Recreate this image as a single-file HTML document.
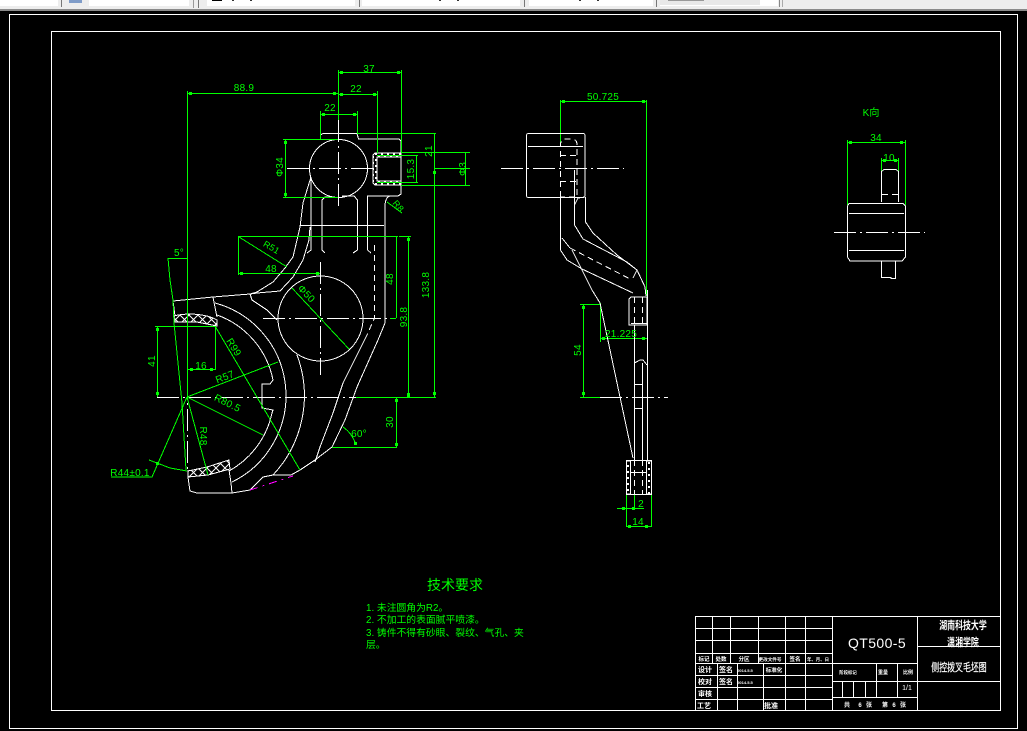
<!DOCTYPE html>
<html><head><meta charset="utf-8"><title>CAD</title>
<style>
html,body{margin:0;padding:0;background:#000;width:1027px;height:731px;overflow:hidden}
svg{position:absolute;left:0;top:0;display:block}
.w{fill:none;stroke:#fff;stroke-width:1}
.g{fill:none;stroke:#0f0;stroke-width:1}
.cl{stroke-dasharray:22 4 2 4}
.da{stroke-dasharray:6 4}
.t{fill:#0f0;font-family:"Liberation Sans",sans-serif;font-size:10px;letter-spacing:.25px;text-anchor:middle}
.c{font-family:"Liberation Sans","Noto Sans CJK SC",sans-serif}
.tb{fill:#fff;font-family:"Liberation Sans","Noto Sans CJK SC",sans-serif;font-size:7px;font-weight:bold;text-anchor:middle}
</style></head><body>
<svg width="1027" height="731" viewBox="0 0 1027 731" xmlns="http://www.w3.org/2000/svg">
<defs>
<pattern id="h" width="9" height="9" patternUnits="userSpaceOnUse">
<path d="M0 0L9 9M9 0L0 9" stroke="#fff" stroke-width="1" fill="none"/>
</pattern>
<pattern id="v" width="6" height="6" patternUnits="userSpaceOnUse">
<rect width="2" height="2" fill="#fff"/><rect x="3" y="3" width="2" height="2" fill="#fff"/>
</pattern>
</defs>
<rect width="1027" height="731" fill="#000"/>
<!-- toolbar -->
<rect x="0" y="0" width="1027" height="9" fill="#ededed"/>
<rect x="0" y="9" width="1027" height="2" fill="#8a8a8a"/>
<rect x="0" y="0" width="58" height="6" fill="#fff"/>
<rect x="61" y="0" width="1" height="7" fill="#777"/>
<rect x="69" y="0" width="13" height="3" fill="#7f9cc8"/>
<rect x="89" y="0" width="100" height="6" fill="#fff"/>
<rect x="193" y="0" width="1" height="8" fill="#999"/><rect x="198" y="0" width="1" height="8" fill="#777"/>
<rect x="207" y="0" width="148" height="6" fill="#fff"/>
<rect x="212" y="0" width="10" height="1" fill="#000"/>
<rect x="232" y="0" width="2" height="1" fill="#333"/><rect x="250" y="0" width="2" height="1" fill="#333"/>
<rect x="359" y="0" width="1" height="7" fill="#777"/>
<rect x="362" y="0" width="158" height="6" fill="#fff"/>
<rect x="439" y="0" width="2" height="1" fill="#333"/><rect x="457" y="0" width="2" height="1" fill="#333"/>
<rect x="524" y="0" width="1" height="7" fill="#777"/>
<rect x="529" y="0" width="124" height="6" fill="#fff"/>
<rect x="579" y="0" width="2" height="1" fill="#333"/><rect x="597" y="0" width="2" height="1" fill="#333"/>
<rect x="656" y="0" width="1" height="7" fill="#777"/>
<rect x="660" y="0" width="118" height="6" fill="#fff"/><rect x="660" y="0" width="100" height="5" fill="#e8e8e8"/>
<rect x="668" y="0" width="36" height="1" fill="#999"/>
<rect x="779" y="0" width="1" height="7" fill="#888"/>
<rect x="782" y="0" width="1" height="7" fill="#aaa"/>
<!-- frames -->
<rect x="9.5" y="14.5" width="1008" height="714" class="w"/>
<rect x="51.5" y="31.5" width="949" height="679" class="w"/>

<g shape-rendering="crispEdges">
<!-- FRONT VIEW white -->
<g class="w">
<circle cx="338.5" cy="168.5" r="29"/>
<circle cx="320.5" cy="318.5" r="42.5"/>
<path class="cl" d="M287 168.5H381"/>
<path class="cl" d="M338.5 120V208"/>
<path class="cl" d="M320.5 262V375"/>
<path class="cl" d="M263 318.5H393"/>
<path class="cl" d="M157 397.5H356"/>
<path class="cl" d="M187.5 377V470"/>
<path d="M320.5 139V135L323 133.5H357L358.5 139H399L401 141V153"/>
<path d="M401 185V194L398 196H390C386 197 385 202 385 207V323L378 340L357 387L345 420L332 447L315 460L300 470L291 475"/>
<path d="M250 490L232 493H197L190 491L188 477V470"/>
<path d="M367.5 250V196H398"/>
<path d="M367.5 250L371 253"/>
<path d="M322 250V200L325 197H335M322 250L325 253"/>
<path d="M357.5 250V200L354 196H342M357.5 250L353 253"/>
<path d="M311 177V250L307 253"/>
<path d="M311 177L303 203L300 227L297 240L293 257L285 268L273 282L257 292L250 294L213 297L173 301L175 316"/>
<path d="M310 227L309 240L303 260L293 277L280 291L257 293L250 294L252 300L267 310L277 320"/>
<path d="M300 225.5H384"/>
<path class="da" d="M374.5 245V318L367 335"/>
<path d="M367 335L343 383L333 413L320 447L315 462"/>
<path d="M213 297L217 317"/>
<path d="M215 303A96 96 0 0 1 232 482"/>
<path d="M217 315A87 87 0 0 1 273 380L270 384H262V408L273 410L272 413A87 87 0 0 1 229 471"/>
<path d="M297 355A116 116 0 0 1 273 475L263 477L250 490"/>
<path d="M273 475H291"/>
<path d="M229 470L231 483L232 493"/>
<path d="M188 471V477"/>
<path d="M174 316C185 313 205 313 217 320V326L197 322H175Z" fill="url(#h)"/>
<path d="M188 471L207 467L229 460L230 469L208 475L188 477Z" fill="url(#h)"/>
<path d="M373 155L375 153H401V185H375L373 183Z" fill="url(#v)"/>
<path d="M377 157H401V181H377Z" fill="#000"/>
</g>
<path d="M250 490L293 476" fill="none" stroke="#f0f" stroke-dasharray="8 5 2 5"/>
<!-- FRONT VIEW green -->
<g class="g">
<path d="M338.5 70V120M401.5 70V153M338 72.5H401"/>
<path d="M377.5 91V153M338 94.5H377"/>
<path d="M187.5 91V397M187 93.5H338"/>
<path d="M320.5 111V139M357.5 111V133M320 114.5H357"/>
<path d="M283 139.5H338M283 197.5H338M285.5 139V197"/>
<path d="M357 133.5H436M434.5 133V397M356 397.5H436"/>
<path d="M401 152.5H470M401 185.5H470M465.5 152V185M434 168.5H470"/>
<path d="M377 155.5H418M377 182.5H418M416.5 155V182"/>
<path d="M387 202L402 213"/>
<path d="M238 236.5H398M399 236.5H411M238.5 236V275M238 273.5H320M239 237L287 267"/>
<path d="M396.5 236V318M390 318.5H396M408.5 236V397M396.5 397V447M332 447.5H397"/>
<path d="M343 427Q352 433 356 445"/>
<path d="M168 258.5H187M168 258L170 280L173 300L174 323L182 403L186 470"/>
<path d="M155 326.5H215M157.5 326V397M215.5 326V370M187 369.5H215"/>
<path d="M215 326L300 470"/>
<path d="M187 397L278 362"/>
<path d="M187 397L263 435"/>
<path d="M187 397L208 475"/>
<path d="M187 397L152 477H111"/>
<path d="M149 460L157 463L170 468L187 471"/>
<path d="M292 288L349 349"/>
<!-- side -->
<path d="M560.5 100V143M646.5 100V296M560 101.5H646"/>
<path d="M600.5 303V342M647.5 325V342M600 338.5H648"/>
<path d="M580 304.5H600M580 397.5H600M583.5 304V397"/>
<path d="M617 508.5H644M626.5 494V527M651.5 494V527M626 526.5H651M634.5 494V510"/>
<!-- K -->
<path d="M847.5 140V205M905.5 140V205M847 142.5H905"/>
<path d="M881.5 158V172M898.5 158V172M881 160.5H898"/>
</g>
<g fill="#0f0">
<rect x="340" y="71" width="3" height="3"/><rect x="397" y="71" width="3" height="3"/>
<rect x="340" y="93" width="3" height="3"/><rect x="373" y="93" width="3" height="3"/>
<rect x="189" y="92" width="3" height="3"/><rect x="333" y="92" width="3" height="3"/>
<rect x="322" y="113" width="3" height="3"/><rect x="353" y="113" width="3" height="3"/>
<rect x="284" y="141" width="3" height="3"/><rect x="284" y="193" width="3" height="3"/>
<rect x="240" y="272" width="3" height="3"/><rect x="316" y="272" width="3" height="3"/>
<rect x="433" y="171" width="3" height="3"/><rect x="407" y="238" width="3" height="3"/>
<rect x="407" y="393" width="3" height="5"/><rect x="433" y="392" width="3" height="3"/>
<rect x="395" y="443" width="3" height="3"/><rect x="395" y="399" width="3" height="3"/>
<rect x="156" y="328" width="3" height="3"/><rect x="156" y="392" width="3" height="3"/>
<rect x="190" y="368" width="3" height="3"/><rect x="210" y="368" width="3" height="3"/>
<rect x="562" y="100" width="3" height="3"/><rect x="642" y="100" width="3" height="3"/>
<rect x="602" y="337" width="3" height="3"/><rect x="642" y="337" width="3" height="3"/>
<rect x="582" y="306" width="3" height="3"/><rect x="582" y="392" width="3" height="3"/>
<rect x="622" y="507" width="3" height="3"/><rect x="632" y="507" width="3" height="3"/>
<rect x="628" y="525" width="3" height="3"/><rect x="645" y="525" width="3" height="3"/>
<rect x="849" y="141" width="3" height="3"/><rect x="900" y="141" width="3" height="3"/>
<rect x="883" y="159" width="3" height="3"/><rect x="894" y="159" width="3" height="3"/>
<rect x="156" y="462" width="3" height="3"/><rect x="354" y="442" width="3" height="3"/>
</g>

<!-- SIDE VIEW white -->
<g class="w">
<rect x="526.5" y="133.5" width="58.5" height="64" rx="2"/>
<path d="M528 146.5H583"/>
<path class="cl" d="M501 168.5H624"/>
<path class="da" d="M560.5 197V145Q560.5 139 566 139H572Q577 139 577 145V197H560"/>
<path class="da" d="M560 155.5H577M560 181.5H577"/>
<path d="M574.5 170V225L583 239L627 262L637 270L633 278"/>
<path d="M585.5 197V222L593 233L617 255L637 270L645 287L646 296"/>
<path d="M560.5 197V250L567 260L582 269L633 293"/>
<path d="M562 238L570 248"/>
<path class="da" d="M570 248L632 280"/>
<path d="M572 250L592 290L600 303L620 397L633 458"/>
<path d="M574.5 205L578 198L585 197"/>
<path d="M629 325V299L631 297H647V325H631Z"/>
<path d="M631 323.5H647"/>
<path class="da" d="M634.5 297V325M642.5 297V325"/>
<path d="M634.5 325V460M642.5 363V460M647.5 290V460"/>
<path d="M634.5 363L640 360H643L647 365"/>
<path d="M634 384.5H642M634 408.5H642"/>
<path class="cl" d="M600 397.5H668"/>
<rect x="626.5" y="460.5" width="25" height="34"/>
<rect x="626.5" y="461" width="4" height="33" fill="url(#v)"/>
<rect x="646.5" y="461" width="5" height="33" fill="url(#v)"/>
<path d="M630 472.5H647"/>
<path class="da" d="M634.5 460V494M642.5 460V494"/>
<!-- K VIEW -->
<path d="M881.5 202V171.5L884 169.5H896L898.5 171.5V202"/>
<path class="da" d="M882 194.5H898"/>
<path d="M880 203.5H901"/>
<path d="M847.5 206L849 203.5H903L905.5 206V257L902 261H850L847.5 257Z"/>
<path d="M849 213.5H904M849 250.5H904"/>
<path class="cl" d="M834 232.5H925"/>
<path d="M881.5 261V277.5H891V278.5H895.5V261"/>
</g>

<!-- TITLE BLOCK -->
<g class="w">
<rect x="695.5" y="616.5" width="305" height="94"/>
<path d="M695 628.5H832M695 640.5H832M695 653.5H832M695 663.5H917M695 675.5H832M695 687.5H832M695 699.5H832"/>
<path d="M712.5 616V663M730.5 616V663M758.5 616V663M785.5 616V711M805.5 616V711"/>
<path d="M717.5 663V711M737.5 663V711M763.5 663V711"/>
<path d="M832.5 616V711M917.5 616V711"/>
<path d="M917 646.5H1001M832 681.5H1001M832 697.5H917"/>
<path d="M842.5 681V697M853.5 681V697M865.5 681V697M876.5 663V697M897.5 663V697"/>
</g>
</g>

<!-- green texts -->
<g class="t">
<text x="369" y="72">37</text>
<text x="356" y="92">22</text>
<text x="330" y="111">22</text>
<text x="244" y="91">88.9</text>
<text transform="translate(283,167) rotate(-90)">Φ34</text>
<text transform="translate(432,151) rotate(-90)">21</text>
<text transform="translate(414,169) rotate(-90)">15.3</text>
<text transform="translate(466,169) rotate(-90)">Φ3</text>
<text transform="translate(429,285) rotate(-90)">133.8</text>
<text transform="translate(393,279) rotate(-90)">48</text>
<text transform="translate(407,317) rotate(-90)">93.8</text>
<text transform="translate(393,422) rotate(-90)">30</text>
<text transform="translate(155,361) rotate(-90)">41</text>
<text transform="translate(396,208) rotate(50)" font-size="9">R8</text>
<text transform="translate(270,250) rotate(30)" font-size="9">R51</text>
<text x="271" y="272">48</text>
<text x="179" y="256">5°</text>
<text x="201" y="369">16</text>
<text transform="translate(231,349) rotate(58)">R99</text>
<text transform="translate(226,380) rotate(-21)">R57</text>
<text transform="translate(226,406) rotate(26)">R80.5</text>
<text transform="translate(200,436) rotate(90)">R48</text>
<text x="130" y="476">R44±0.1</text>
<text x="359" y="437">60°</text>
<text transform="translate(304,296) rotate(46)">Φ50</text>
<text x="603" y="100">50.725</text>
<text x="621" y="337">21.225</text>
<text transform="translate(581,350) rotate(-90)">54</text>
<text x="641" y="507">2</text>
<text x="638" y="525">14</text>
<text x="876" y="141">34</text>
<text x="889" y="161">10</text>
<text class="c" x="871" y="116" font-size="10" style="letter-spacing:0">K向</text>
</g>

<g class="c" fill="#0f0" font-family="&quot;Liberation Sans&quot;,&quot;Noto Sans CJK SC&quot;,sans-serif">
<text x="427" y="590" font-size="14">技术要求</text>
<text x="366" y="611" font-size="9.8">1.  未注圆角为R2。</text>
<text x="366" y="623" font-size="9.8">2.  不加工的表面腻平喷漆。</text>
<text x="366" y="636" font-size="9.8">3.  铸件不得有砂眼、裂纹、气孔、夹</text>
<text x="366" y="648" font-size="9.8">层。</text>
</g>

<!-- title block text -->
<g class="tb">
<text x="704" y="661" font-size="5.5">标记</text>
<text x="721" y="661" font-size="5.5">处数</text>
<text x="744" y="661" font-size="5.5">分区</text>
<text x="770" y="661" font-size="4.6">更改文件号</text>
<text x="795" y="661" font-size="5.5">签名</text>
<text x="818" y="661" font-size="4.4">年、月、日</text>
<text x="705" y="672">设计</text>
<text x="726" y="672">签名</text>
<text x="745" y="672" font-size="4">2014.5.5</text>
<text x="774" y="672" font-size="5.5">标准化</text>
<text x="705" y="684">校对</text>
<text x="726" y="684">签名</text>
<text x="745" y="684" font-size="4">2014.5.5</text>
<text x="705" y="696">审核</text>
<text x="704" y="708">工艺</text>
<text x="771" y="708">批准</text>
<text x="848" y="674" font-size="4.4">阶段标记</text>
<text x="883" y="674" font-size="5">重量</text>
<text x="908" y="674" font-size="5">比例</text>
<text x="907" y="690" style="font-weight:normal">1/1</text>
<text x="847" y="707" font-size="6">共</text>
<text x="860" y="707" font-size="6">6</text>
<text x="869" y="707" font-size="6">张</text>
<text x="885" y="707" font-size="6">第</text>
<text x="894" y="707" font-size="6">6</text>
<text x="903" y="707" font-size="6">张</text>
<text transform="translate(963,629) scale(.72,1)" font-size="11">湖南科技大学</text>
<text transform="translate(963,646) scale(.72,1)" font-size="11">潇湘学院</text>
<text transform="translate(959,671) scale(.72,1)" font-size="11" style="font-weight:normal;stroke:#fff;stroke-width:.2">侧控拨叉毛坯图</text>
</g>
<text x="877" y="648" fill="#fff" font-family="&quot;Liberation Sans&quot;,sans-serif" font-size="14" text-anchor="middle" letter-spacing=".4">QT500-5</text>
</svg>
</body></html>
